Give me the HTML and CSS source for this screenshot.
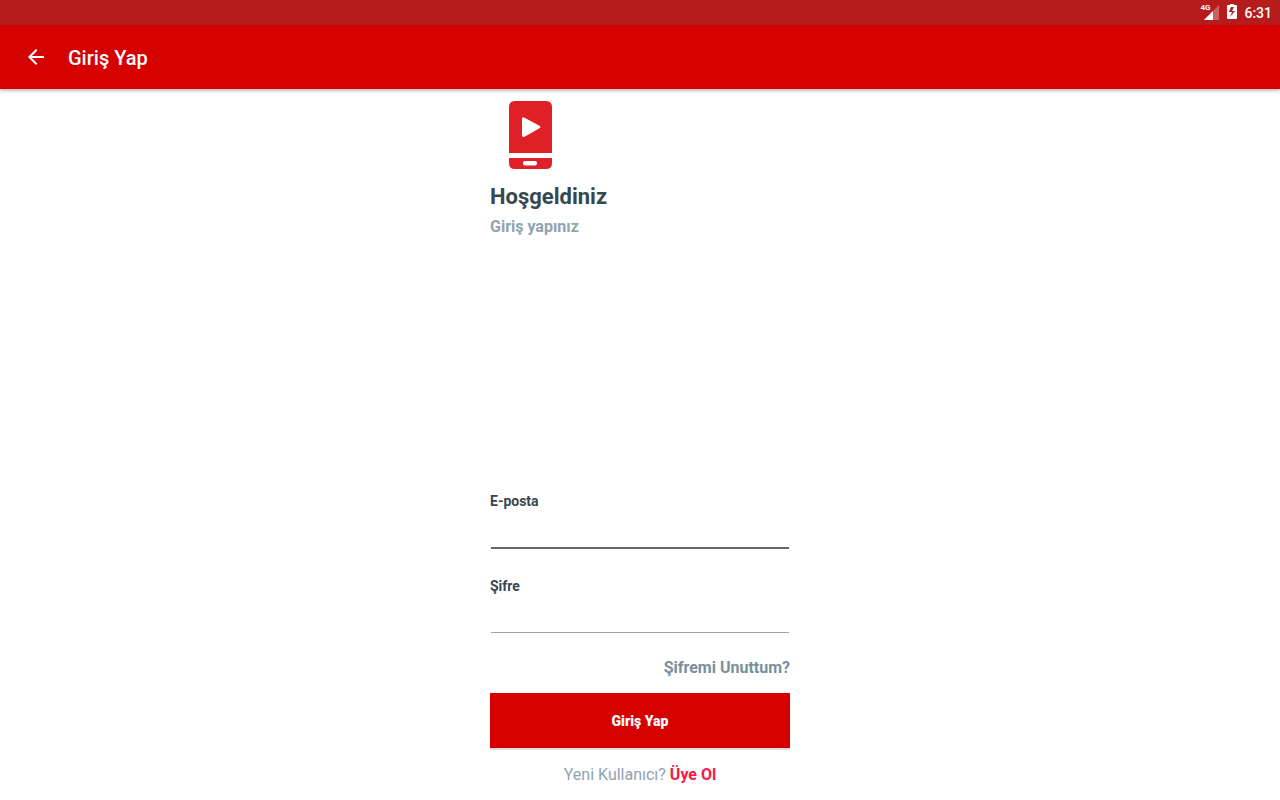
FILE: index.html
```html
<!DOCTYPE html>
<html lang="tr">
<head>
<meta charset="utf-8">
<meta name="viewport" content="width=device-width, initial-scale=1">
<title>Giriş Yap</title>
<link rel="stylesheet" href="styles.css">
</head>
<body class="screen">
<div class="status-bar">
  <span class="signal">
    <svg width="18" height="15" viewBox="0 0 18 15" aria-hidden="true"><path d="M3 15L18 0V15Z" fill="#fff" fill-opacity=".3"/><path d="M3 15L12 6V15Z" fill="#fff"/></svg>
    <span class="network">4G</span>
  </span>
  <svg class="battery" width="10" height="15" viewBox="0 0 10 15" aria-hidden="true"><path fill="#fff" fill-rule="evenodd" d="M3 0H7V1H9Q10 1 10 2V14Q10 15 9 15H1Q0 15 0 14V2Q0 1 1 1H3ZM7 3H4L2 8H5L3 13L8 7H5Z"/></svg>
  <time class="clock">6:31</time>
</div>
<header class="app-bar">
  <button class="back" type="button" aria-label="Geri"><svg width="24" height="24" viewBox="0 0 24 24" aria-hidden="true"><path fill="#fff" d="M20 11H7.830l5.590-5.590L12 4l-8 8 8 8 1.410-1.410L7.830 13H20v-2z"/></svg></button>
  <h1 class="title">Giriş Yap</h1>
</header>
<main class="content">
  <svg class="logo" width="43" height="68" viewBox="0 0 43 68" aria-hidden="true"><path fill="#df2027" d="M0 52V6Q0 0 6 0H37Q43 0 43 6V52ZM0 57H43V62Q43 68 37 68H6Q0 68 0 62Z"/><path fill="#fff" d="M13 18Q13 15 16 17L30 24.500Q33 26 30 27.500L16 35.500Q13 37 13 34Z"/><rect x="14" y="60" width="14" height="4.500" rx="2" fill="#fff"/></svg>
  <h2 class="welcome">Hoşgeldiniz</h2>
  <p class="subtitle">Giriş yapınız</p>
  <form class="login">
    <label class="label" for="email">E-posta</label>
    <input class="field field-active" id="email" type="email">
    <label class="label" for="password">Şifre</label>
    <input class="field" id="password" type="password">
    <a class="forgot" href="#">Şifremi Unuttum?</a>
    <button class="submit" type="submit">Giriş Yap</button>
    <p class="signup">Yeni Kullanıcı? <a class="signup-link" href="#">Üye Ol</a></p>
  </form>
</main>
</body>
</html>
```
FILE: styles.css
```css
* { box-sizing: border-box; }

.screen {
  display: flex;
  flex-direction: column;
  min-height: 100vh;
  margin: 0;
  background: #fefefe;
  color: #37474f;
  font-family: Roboto, "Liberation Sans", sans-serif;
}

.status-bar {
  display: flex;
  align-items: center;
  justify-content: flex-end;
  height: 25px;
  padding: 0 8px;
  background: #b71c1c;
  color: #fff;
}

.signal { position: relative; display: flex; margin-right: 8px; }

.network {
  position: absolute;
  top: -1px;
  left: -1px;
  font-size: 8px;
  line-height: 8px;
  font-weight: 700;
}

.battery { margin: 0 7px 2px 0; }

.clock { font-size: 14px; line-height: 16px; font-weight: 500; padding-top: 1px; }

.app-bar {
  display: flex;
  align-items: center;
  height: 64px;
  padding: 0 24px;
  gap: 20px;
  background: #d50000;
  color: #fff;
  box-shadow: 0 2px 3px rgba(0, 0, 0, .25);
}

.back { display: flex; padding: 0; border: 0; background: none; }

.title { margin: 0; padding-top: 2px; font-size: 20px; line-height: 24px; font-weight: 500; }

.content {
  display: flex;
  flex: 1;
  flex-direction: column;
  width: 100%;
  max-width: 300px;
  margin: 0 auto;
  padding: 12px 0 14px;
}

.logo { flex: none; margin-left: 19px; }

.welcome { margin: 13px 0 0; font-size: 22px; line-height: 30px; font-weight: 700; }

.subtitle {
  margin: 4px 0 0;
  color: #90a4ae;
  font-size: 16px;
  line-height: 22px;
  font-weight: 700;
}

.login { display: flex; flex-direction: column; margin-top: auto; padding-top: 24px; }

.label { font-size: 14px; line-height: 20px; font-weight: 700; }

.field {
  height: 37px;
  margin: 0 1px 28px;
  padding: 0 4px;
  border: 0;
  border-bottom: 1px solid #a3a3a3;
  background: none;
  color: #37474f;
  font: inherit;
  font-size: 16px;
  outline: none;
}

.field-active { height: 38px; margin-bottom: 27px; border-bottom: 2px solid #666; }

.field + .forgot { margin-top: -3px; }

.forgot {
  align-self: flex-end;
  color: #78909c;
  font-size: 16px;
  line-height: 20px;
  font-weight: 700;
  text-decoration: none;
}

.submit {
  height: 55px;
  margin: 15px 0 16px;
  border: 0;
  background: #d50000;
  box-shadow: 0 2px 0 rgba(0, 0, 0, .12);
  color: #fff;
  font: inherit;
  font-size: 14px;
  font-weight: 900;
}

.signup { margin: 0; color: #90a4ae; font-size: 16px; line-height: 22px; text-align: center; }

.signup-link { color: #ff1744; font-weight: 700; text-decoration: none; }
```
